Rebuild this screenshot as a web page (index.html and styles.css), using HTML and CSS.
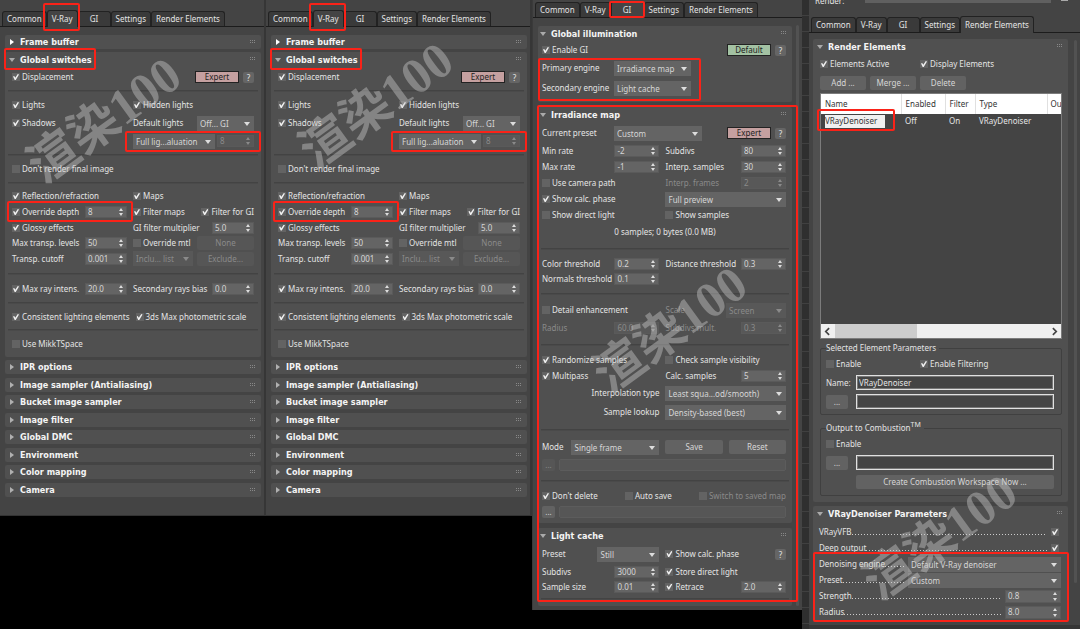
FILE: index.html
```html
<!DOCTYPE html>
<html lang="en">
<head>
<meta charset="utf-8">
<title>Render Setup</title>
<link rel="stylesheet" href="styles.css">
</head>
<body>
<main class="board">

<section class="col vray" data-vray></section>
<section class="col vray second" data-vray></section>

<section class="col gi">
  <nav class="tabs"><button>Common</button><button>V-Ray</button><button class="short on">GI</button><button>Settings</button><button>Render Elements</button></nav>
  <div class="panels">
    <section class="panel">
      <h2 class="open">Global illumination</h2>
      <div class="row"><label class="chk"><input type="checkbox" checked>Enable GI</label><div class="cell end"><button class="mode green">Default</button><button class="help">?</button></div></div>
      <div class="line h20"><label class="lab" for="pe">Primary engine</label><span class="sel w77"><select id="pe"><option>Irradiance map</option></select></span></div>
      <div class="line h20"><label class="lab" for="se">Secondary engine</label><span class="sel w77"><select id="se"><option>Light cache</option></select></span></div>
      <div class="foot4"></div>
    </section>
    <section class="panel">
      <h2 class="open">Irradiance map</h2>
      <div class="line h20"><label class="lab" for="cp">Current preset</label><span class="sel w88"><select id="cp"><option>Custom</option></select></span><div class="cell end"><button class="mode pink">Expert</button><button class="help">?</button></div></div>
      <div class="row"><label class="cell">Min rate<span class="spin"><input value="-2"></span></label><label class="cell">Subdivs<span class="spin"><input value="80"></span></label></div>
      <div class="row"><label class="cell">Max rate<span class="spin"><input value="-1"></span></label><label class="cell">Interp. samples<span class="spin"><input value="30"></span></label></div>
      <div class="row"><label class="chk"><input type="checkbox">Use camera path</label><label class="cell dim">Interp. frames<span class="spin"><input value="2" disabled></span></label></div>
      <div class="row"><label class="chk"><input type="checkbox" checked>Show calc. phase</label><div class="cell"><span class="sel fill"><select aria-label="Preview"><option>Full preview</option></select></span></div></div>
      <div class="row"><label class="chk"><input type="checkbox">Show direct light</label><label class="chk"><input type="checkbox">Show samples</label></div>
      <p class="h18">0 samples; 0 bytes (0.0 MB)</p>
      <hr class="wide">
      <div class="row h15"><label class="cell">Color threshold<span class="spin"><input value="0.2"></span></label><label class="cell">Distance threshold<span class="spin"><input value="0.3"></span></label></div>
      <div class="row h15"><label class="cell">Normals threshold<span class="spin"><input value="0.1"></span></label></div>
      <hr class="wide">
      <div class="row h18"><label class="chk"><input type="checkbox">Detail enhancement</label><label class="cell dim">Scale<span class="sel w60"><select disabled><option>Screen</option></select></span></label></div>
      <div class="row h18"><label class="cell dim">Radius<span class="spin"><input value="60.0" disabled></span></label><label class="cell dim">Subdivs mult.<span class="spin"><input value="0.3" disabled></span></label></div>
      <hr class="wide">
      <div class="row"><label class="chk"><input type="checkbox" checked>Randomize samples</label><label class="chk"><input type="checkbox">Check sample visibility</label></div>
      <div class="row"><label class="chk"><input type="checkbox" checked>Multipass</label><label class="cell">Calc. samples<span class="spin"><input value="5"></span></label></div>
      <div class="row h18"><label class="cell end" for="it">Interpolation type</label><div class="cell"><span class="sel fill"><select id="it"><option>Least squa...od/smooth)</option></select></span></div></div>
      <div class="row h20"><label class="cell end" for="sl">Sample lookup</label><div class="cell"><span class="sel fill"><select id="sl"><option>Density-based (best)</option></select></span></div></div>
      <hr class="wide">
      <div class="row h20"><label class="cell">Mode<span class="sel w88"><select><option>Single frame</option></select></span></label><div class="cell pair"><button class="btn">Save</button><button class="btn">Reset</button></div></div>
      <div class="line"><button class="btn dots" disabled>...</button><input class="path" aria-label="Map file" disabled></div>
      <hr class="wide">
      <div class="line spread"><label class="chk"><input type="checkbox" checked>Don't delete</label><label class="chk"><input type="checkbox">Auto save</label><label class="chk dim"><input type="checkbox" disabled>Switch to saved map</label></div>
      <div class="line"><button class="btn dots">...</button><input class="path" aria-label="Auto save file"></div>
      <div class="foot3"></div>
    </section>
    <section class="panel">
      <h2 class="open">Light cache</h2>
      <div class="row h20"><label class="cell">Preset<span class="sel w62"><select><option>Still</option></select></span></label><div class="cell"><label class="chk"><input type="checkbox" checked>Show calc. phase</label><button class="help">?</button></div></div>
      <div class="row h15"><label class="cell">Subdivs<span class="spin"><input value="3000"></span></label><label class="chk"><input type="checkbox" checked>Store direct light</label></div>
      <div class="row h15"><label class="cell">Sample size<span class="spin"><input value="0.01"></span></label><div class="cell"><label class="chk"><input type="checkbox" checked>Retrace</label><span class="spin"><input value="2.0" aria-label="Retrace"></span></div></div>
      <hr>
      <div class="foot2"></div>
    </section>
  </div>
  <i class="scroll"></i>
  <div class="stamp">渲染<b>100</b></div>
  <i class="mark m-gitab"></i><i class="mark m-engines"></i><i class="mark m-irr"></i>
</section>

<section class="col elements">
  <div class="window">
  <div class="render"><label for="rv">Render:</label><input id="rv"><i class="lock"></i></div>
  <nav class="tabs"><button>Common</button><button>V-Ray</button><button class="short">GI</button><button>Settings</button><button class="on">Render Elements</button></nav>
  <div class="panels">
    <section class="panel">
      <h2 class="open">Render Elements</h2>
      <div class="row h18"><label class="chk"><input type="checkbox" checked>Elements Active</label><label class="chk"><input type="checkbox" checked>Display Elements</label></div>
      <div class="line h20 trio"><button class="btn">Add ...</button><button class="btn">Merge ...</button><button class="btn">Delete</button></div>
      <div class="list">
        <table>
          <thead><tr><th class="c1">Name</th><th class="c2">Enabled</th><th class="c3">Filter</th><th class="c4">Type</th><th>Ou</th></tr></thead>
          <tbody><tr><td><span class="picked">VRayDenoiser</span></td><td>Off</td><td>On</td><td>VRayDenoiser</td><td></td></tr></tbody>
        </table>
        <div class="hbar"><svg viewBox="0 0 8 8"><path d="M5 1 2 4l3 3"/></svg><i></i><svg viewBox="0 0 8 8"><path d="m3 1 3 3-3 3"/></svg></div>
      </div>
      <fieldset>
        <legend>Selected Element Parameters</legend>
        <div class="row h18"><label class="chk"><input type="checkbox">Enable</label><label class="chk"><input type="checkbox" checked>Enable Filtering</label></div>
        <div class="line h19"><label class="key" for="nm">Name:</label><input class="field" id="nm" value="VRayDenoiser"></div>
        <div class="line h19"><div class="key"><button class="btn dots2">...</button></div><input class="field" aria-label="Output file"></div>
      </fieldset>
      <fieldset>
        <legend>Output to Combustion<sup>TM</sup></legend>
        <div class="row h18"><label class="chk"><input type="checkbox">Enable</label></div>
        <div class="line h19"><div class="key"><button class="btn dots2">...</button></div><input class="field" aria-label="Combustion file"></div>
        <div class="line h20"><div class="key"></div><button class="btn grow">Create Combustion Workspace Now ...</button></div>
      </fieldset>
    </section>
    <section class="panel">
      <h2 class="open">VRayDenoiser Parameters</h2>
      <div class="foot2"></div>
      <label class="line lead">VRayVFB<i></i><input type="checkbox" checked></label>
      <label class="line lead">Deep output<i></i><input type="checkbox" checked></label>
      <div class="line lead"><label class="lab" for="de">Denoising engine<i></i></label><span class="sel fill"><select id="de"><option>Default V-Ray denoiser</option></select></span></div>
      <div class="line lead"><label class="lab" for="dp">Preset<i></i></label><span class="sel fill"><select id="dp"><option>Custom</option></select></span></div>
      <label class="line lead">Strength<i></i><span class="spin"><input value="0.8"></span></label>
      <label class="line lead">Radius<i></i><span class="spin"><input value="8.0"></span></label>
      <div class="foot2"></div>
    </section>
  </div>
  </div>
  <i class="scroll"></i>
  <div class="stamp">渲染<b>100</b></div>
  <i class="mark m-row"></i><i class="mark m-denoise"></i>
</section>
</main>

<template id="vray">
  <nav class="tabs"><button>Common</button><button class="on">V-Ray</button><button class="short">GI</button><button>Settings</button><button>Render Elements</button></nav>
  <div class="panels">
    <section class="panel"><h2 class="strong">Frame buffer</h2></section>
    <section class="panel">
      <h2 class="open">Global switches</h2>
      <div class="row h18"><label class="chk"><input type="checkbox" checked>Displacement</label><div class="cell end"><button class="mode pink">Expert</button><button class="help">?</button></div></div>
      <hr>
      <div class="row h18"><label class="chk"><input type="checkbox" checked>Lights</label><label class="chk"><input type="checkbox" checked>Hidden lights</label></div>
      <div class="row h18"><label class="chk"><input type="checkbox" checked>Shadows</label><label class="cell">Default lights<span class="sel w57"><select><option>Off... GI</option></select></span></label></div>
      <div class="row h18"><span></span><div class="cell"><span class="sel w82"><select aria-label="Light evaluation"><option>Full lig...aluation</option></select></span><span class="spin w37"><input value="8" aria-label="Light count" disabled></span></div></div>
      <hr>
      <div class="row h18"><label class="chk"><input type="checkbox">Don't render final image</label></div>
      <hr>
      <div class="row"><label class="chk"><input type="checkbox" checked>Reflection/refraction</label><label class="chk"><input type="checkbox" checked>Maps</label></div>
      <div class="row"><div class="cell"><label class="chk"><input type="checkbox" checked>Override depth</label><span class="spin"><input value="8" aria-label="Depth"></span></div><div class="cell"><label class="chk"><input type="checkbox" checked>Filter maps</label><label class="chk"><input type="checkbox" checked>Filter for GI</label></div></div>
      <div class="row h15"><label class="chk"><input type="checkbox" checked>Glossy effects</label><label class="cell">GI filter multiplier<span class="spin"><input value="5.0"></span></label></div>
      <div class="row"><label class="cell">Max transp. levels<span class="spin"><input value="50"></span></label><div class="cell"><label class="chk"><input type="checkbox">Override mtl</label><button class="btn w57" disabled>None</button></div></div>
      <div class="row h15"><label class="cell">Transp. cutoff<span class="spin"><input value="0.001"></span></label><div class="cell"><span class="sel w60"><select aria-label="List type" disabled><option>Inclu... list</option></select></span><button class="btn w57" disabled>Exclude...</button></div></div>
      <hr class="wide">
      <div class="row"><div class="cell"><label class="chk"><input type="checkbox" checked>Max ray intens.</label><span class="spin"><input value="20.0" aria-label="Max ray intensity"></span></div><label class="cell">Secondary rays bias<span class="spin"><input value="0.0"></span></label></div>
      <hr class="mid">
      <div class="row"><label class="chk"><input type="checkbox" checked>Consistent lighting elements</label><label class="chk"><input type="checkbox" checked>3ds Max photometric scale</label></div>
      <hr>
      <div class="row h18"><label class="chk"><input type="checkbox">Use MikkTSpace</label></div>
      <div class="foot4"></div>
    </section>
    <div class="closed">
      <h2>IPR options</h2><h2>Image sampler (Antialiasing)</h2><h2>Bucket image sampler</h2><h2>Image filter</h2><h2>Global DMC</h2><h2>Environment</h2><h2>Color mapping</h2><h2>Camera</h2>
    </div>
  </div>
  <div class="stamp">渲染<b>100</b></div>
  <i class="mark m-tab"></i><i class="mark m-global"></i><i class="mark m-full"></i><i class="mark m-depth"></i>
</template>
<script src="script.js"></script>
</body>
</html>
```
FILE: script.js
```js
const source = document.getElementById('vray');
document.querySelectorAll('[data-vray]').forEach(host => host.append(source.content.cloneNode(true)));
```
FILE: styles.css
```css
* { box-sizing: border-box; }
body { margin: 0; background: #000; color: #e4e4e4; font: 8px/12px "Noto Sans", "Noto Sans CJK SC", sans-serif; }
button, input, select { font: inherit; color: inherit; margin: 0; }
h2, p { margin: 0; }
.board { display: grid; grid-template-columns: 266fr 266fr 270fr 278fr; align-items: start; overflow: hidden; }
.col { position: relative; min-width: 0; background: #444; white-space: nowrap; }
.vray { display: flex; flex-direction: column; min-height: 516px; padding: 10px 0 18px; border-right: 2px solid #363636; border-bottom: 1px solid #333; }
.gi { padding: 1px 0 4px; border-left: 1px solid #3a3a3a; }
.elements { display: flex; min-height: 629px; padding-left: 7px; background: repeating-linear-gradient(#2f2f2f 0 15px, #404040 15px 16px); }
.window { flex: 1; min-width: 0; background: #444; border-bottom: 4px solid #363636; }

/* tabs */
.tabs { display: flex; align-items: flex-end; height: 17px; padding-left: 2px; border-bottom: 1px solid #1c1c1c; }
.tabs button { height: 15px; padding: 0 4px; background: #3a3a3a; border: 1px solid #222; border-bottom: 0; border-radius: 3px 3px 0 0; line-height: 12px; }
.tabs .short { min-width: 33px; }
.tabs .on { height: 17px; margin-bottom: -1px; background: #444; }

/* rollups */
.panels { display: flex; flex-direction: column; gap: 3px; padding: 8px 3px 0 5px; flex: 1; }
.gi .panels { gap: 5px; padding: 8px 10px 0 5px; }
.panel, .closed h2 { background: #505050; border-radius: 2px; }
.closed { flex: 1; display: flex; flex-direction: column; justify-content: space-between; }
h2 { position: relative; height: 14px; padding-left: 15px; color: #f4f4f4; font: bold 9px/14px "DejaVu Sans Condensed", sans-serif; }
h2.open { height: 16px; line-height: 16px; }
.gi h2 { padding-left: 13px; }
h2::before { content: ""; position: absolute; left: 5px; top: 4px; border: 3px solid transparent; border-left: 4px solid #b0b0b0; border-right: 0; }
h2.strong::before { border-left-color: #fff; }
h2.open::before { top: 6px; left: 4px; border: 3px solid transparent; border-top: 4px solid #aaa; border-bottom: 0; }
.gi h2.open::before { left: 2px; }
h2::after { content: ""; position: absolute; right: 6px; top: 4px; width: 5px; height: 5px; background: repeating-linear-gradient(#505050 0 1px, transparent 1px 2px), repeating-linear-gradient(90deg, #888 0 1px, #505050 1px 2px); }

/* form rows */
.row { display: grid; grid-template-columns: 115fr 121fr; column-gap: 6px; align-items: center; height: 16px; padding: 0 7px; }
.gi .row, .gi .line { padding: 0 6px 0 4px; }
.gi .row { grid-template-columns: 117fr 120fr; }
.line { display: flex; align-items: center; height: 16px; padding: 0 7px; }
.row.h15, .h15 { height: 15px; }
.row.h18, .h18 { height: 18px; }
.h19 { height: 19px; }
.row.h20, .h20 { height: 20px; }
.cell { display: flex; align-items: center; justify-content: space-between; min-width: 0; }
.cell.end { justify-content: flex-end; gap: 4px; }
.line .cell.end { flex: 1; }
.lab { width: 72px; }
.dim { color: #8a8a8a; }
p { text-align: center; line-height: 18px; }
hr { height: 2px; margin: 4px 3px; border: 0; background: #434343; border-bottom: 1px solid #4a4a4a; }
hr.mid { margin: 5px 3px; }
hr.wide { margin: 7px 3px 6px; }
.foot2 { height: 2px; }
.foot3 { height: 3px; }
.foot4 { height: 4px; }

/* controls */
.chk { display: flex; align-items: center; gap: 2px; }
input[type=checkbox] { appearance: none; position: relative; flex: none; width: 8px; height: 8px; background: #636363; }
input[type=checkbox]:checked::before { content: ""; position: absolute; inset: 1px; background: #f0f0f0; clip-path: polygon(0 40%, 20% 35%, 38% 62%, 80% 0, 100% 8%, 46% 100%, 28% 100%); }
input:disabled, select:disabled { opacity: 1; }
.spin, .sel { position: relative; display: block; flex: none; background: #646464; color: #d6d6d6; }
.spin { width: 45px; height: 12px; border: 1px solid #5a5a5a; }
.vray .spin { width: 42px; }
.vray .spin.w37 { width: 37px; }
.spin input { display: block; width: 100%; height: 10px; padding: 0 2px; border: 0; background: none; line-height: 10px; }
.spin::before, .spin::after, .sel::after { content: ""; position: absolute; right: 3px; border: 2px solid transparent; pointer-events: none; }
.spin::before { top: 1px; border-bottom: 3px solid #ddd; border-top: 0; }
.spin::after { bottom: 1px; border-top: 3px solid #ddd; border-bottom: 0; }
.sel { height: 15px; }
.sel select { display: block; appearance: none; width: 100%; height: 15px; padding: 0 3px; border: 0; background: none; line-height: 15px; }
.sel::after { right: 4px; top: 6px; border: 3px solid transparent; border-top: 4px solid #ddd; border-bottom: 0; }
.sel:has(:disabled), .spin:has(:disabled) { background: #585858; color: #8a8a8a; }
.sel:has(:disabled)::after, .spin:has(:disabled)::after { border-top-color: #8a8a8a; }
.spin:has(:disabled)::before { border-bottom-color: #8a8a8a; }
.w57 { width: 57px; }
.w60 { width: 60px; }
.w62 { width: 62px; }
.w77 { width: 77px; }
.w82 { width: 82px; }
.w88 { width: 88px; }
.fill { flex: 1; }
.btn { height: 14px; padding: 0 4px; border: 0; border-radius: 2px; background: #626262; line-height: 12px; color: #d6d6d6; }
.btn:disabled { background: #565656; color: #8a8a8a; }
.dots { width: 13px; height: 12px; padding: 0; }
.mode { width: 44px; height: 12px; padding: 0; border: 1px solid #222; color: #222; line-height: 10px; }
.pink { background: #c5a0a0; }
.green { background: #a3c2a3; }
.help { width: 11px; height: 11px; padding: 0; border: 0; border-radius: 2px; background: #656565; line-height: 11px; }
.pair { gap: 6px; }
.pair .btn { flex: 1; }
.path { flex: 1; min-width: 0; height: 12px; margin-left: 4px; border: 1px solid #5c5c5c; background: #565656; border-radius: 2px; }
.spread { justify-content: space-between; }

/* render elements window */
.render { display: flex; height: 16px; padding-left: 6px; }
.render label { width: 50px; margin-top: -5px; }
.render input { width: 186px; height: 3px; padding: 0; border: 0; background: #606060; }
.lock { width: 7px; height: 1px; margin-left: 10px; background: #aaa; }
.elements .panels { padding: 6px 12px 0 4px; gap: 4px; }
.elements .row { grid-template-columns: 1fr 141px; column-gap: 0; }
.trio { gap: 4px; }
.trio .btn { width: 46px; }
.list { display: flex; flex-direction: column; justify-content: space-between; height: 246px; margin: 0 6px 0 7px; border: 1px solid #7c7c7c; background: #444; overflow: hidden; }
table { width: 100%; table-layout: fixed; border-collapse: collapse; text-align: left; }
th { height: 20px; padding: 0 4px; background: #fff; color: #333; font-weight: normal; border-right: 1px solid #e0e0e0; overflow: hidden; }
td { height: 14px; padding: 0 4px; }
.c1 { width: 80px; }
.c2 { width: 44px; }
.c3 { width: 30px; }
.c4 { width: 72px; }
th:last-child { padding: 0 0 0 3px; border: 0; }
.picked { display: block; width: 60px; height: 13px; background: #f0f0f0; color: #333; }
.hbar { display: flex; align-items: center; height: 14px; background: #f0f0f0; }
.hbar svg { width: 14px; height: 9px; fill: none; stroke: #444; stroke-width: 1.5; }
.hbar i { width: 82px; height: 14px; margin-right: auto; background: #cdcdcd; }
fieldset { min-width: 0; margin: 2px 6px 6px 7px; padding: 0 7px 3px 5px; border: 1px solid #404040; border-radius: 2px; }
legend { height: 14px; padding: 0 3px 0 0; line-height: 14px; }
sup { font-size: 7px; line-height: 0; }
fieldset .row, fieldset .line { padding: 0; }
.elements fieldset .row { grid-template-columns: 1fr 134px; }
.key { width: 30px; }
.field { flex: 1; min-width: 0; height: 15px; padding: 0 2px; border: 1px solid #e0e0e0; outline: 1px solid #777; outline-offset: -2px; background: #444; }
.dots2 { display: block; width: 22px; }
.grow { flex: 1; }
.lead i { flex: 1; height: 1px; margin: 5px 4px 0 0; background: repeating-linear-gradient(90deg, #ccc 0 1px, transparent 1px 3px); }
.lead .lab { display: flex; width: 89px; align-items: center; }
.elements .lead { padding: 0 7px 0 6px; }
.lead .spin { width: 56px; height: 13px; }
.lead input[type=checkbox] { margin-right: 2px; }

/* notes drawn over the windows */
.scroll { position: absolute; right: 3px; top: 25px; bottom: 4px; width: 3px; background: #525252; border-radius: 2px; }
.elements .scroll { top: 40px; bottom: 46px; }
.stamp { position: absolute; left: 4px; top: 88px; width: 200px; text-align: center; font: bold 50px/64px "Liberation Serif", "Noto Sans CJK SC", serif; color: rgba(205, 205, 205, .42); transform: rotate(-36deg); pointer-events: none; }
.second .stamp { left: 10px; top: 73px; }
.gi .stamp { left: 37px; top: 297px; }
.elements .stamp { left: 38px; top: 505px; }
.mark { position: absolute; border: 2px solid #fa2218; border-radius: 2px; pointer-events: none; }
.m-tab { left: 43px; top: 3px; width: 37px; height: 28px; }
.m-global { left: 4px; top: 48px; width: 92px; height: 22px; }
.m-full { left: 125px; right: 3px; top: 131px; height: 21px; }
.m-depth { left: 7px; top: 201px; width: 126px; height: 21px; }
.m-gitab { left: 76px; top: 1px; width: 36px; height: 17px; }
.m-engines { left: 5px; top: 58px; width: 163px; height: 43px; }
.m-irr { left: 4px; right: 4px; top: 105px; height: 497px; }
.m-row { left: 15px; top: 109px; width: 78px; height: 22px; }
.m-denoise { left: 11px; right: 11px; top: 552px; height: 70px; }
```
